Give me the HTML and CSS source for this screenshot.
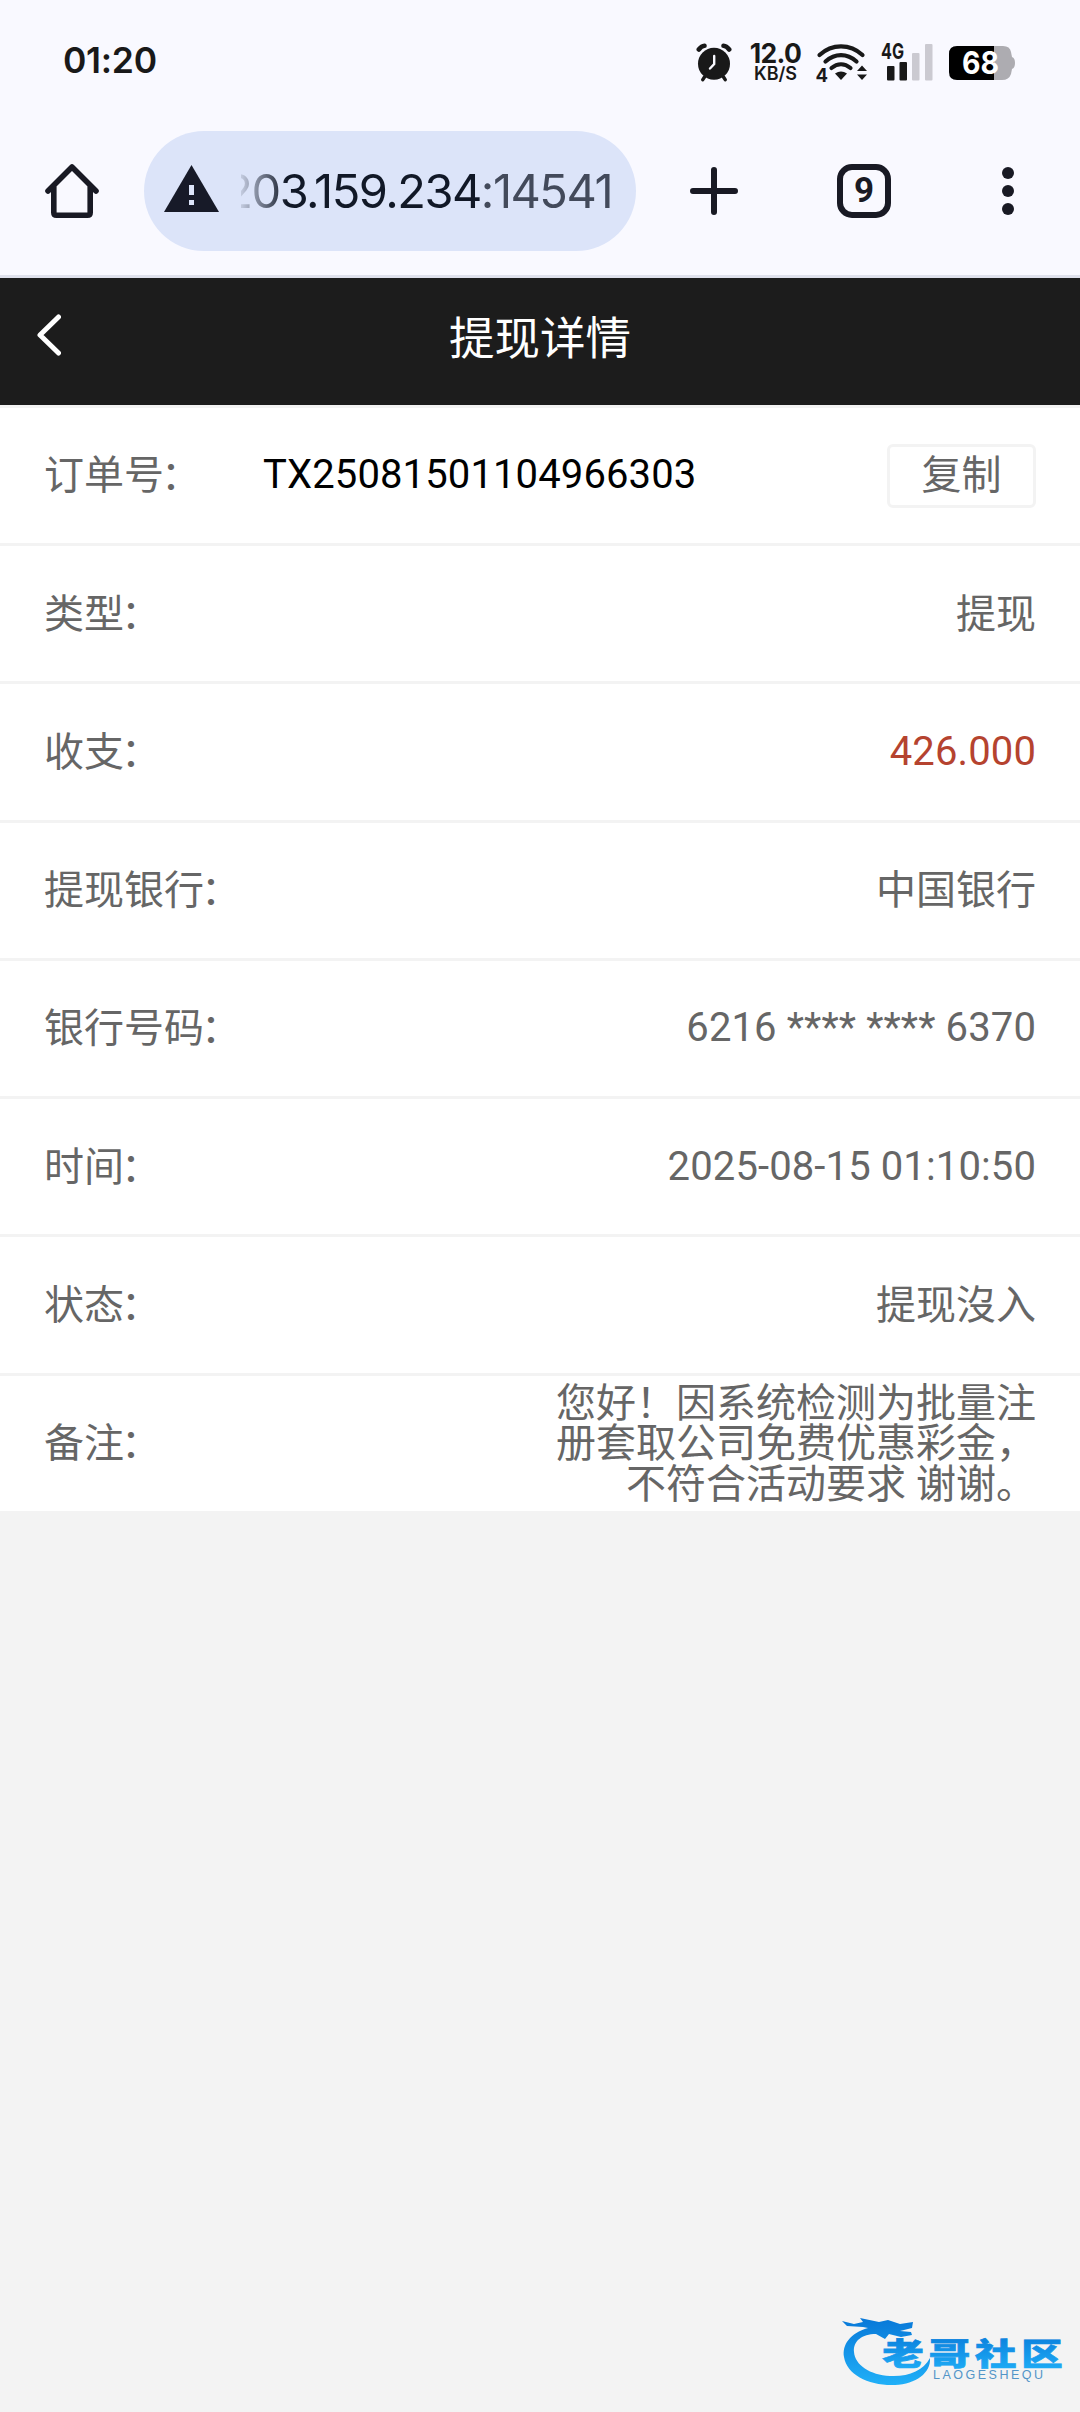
FILE: index.html
```html
<!DOCTYPE html>
<html lang="zh-CN">
<head>
<meta charset="utf-8">
<title>提现详情</title>
<link rel="stylesheet" href="styles.css">
</head>
<body>
<div class="status">
  <span class="clock">01:20</span>
  <div class="indicators">
    <svg class="alarm" width="36" height="39" viewBox="0 0 36 39">
      <g fill="none" stroke="#191919" stroke-linecap="round">
        <path d="M2.8 6.5Q5.500 3 8.500 2.800M33.200 6.500Q30.500 3 27.500 2.800" stroke-width="4.600"/>
        <path d="M8.500 34L6.800 36.700M27.500 34L29.200 36.700" stroke-width="3.400"/>
      </g>
      <circle cx="18" cy="20.800" r="16" fill="#191919"/>
      <path d="M18.200 13V21L14 25.500" fill="none" stroke="#f9f9ff" stroke-width="2.400" stroke-linecap="round"/>
    </svg>
    <div class="speed"><span class="rate">12.0</span><span class="unit">KB/S</span></div>
    <svg class="wifi" width="52" height="40" viewBox="0 0 52 40">
      <g fill="none" stroke="#191919" stroke-width="4.200" stroke-linecap="round">
        <path d="M3.500 12C16 .500 34 .500 46.500 12"/>
        <path d="M9.500 18.500C19 10 31 10 40.500 18.500"/>
        <path d="M15.500 25C21.500 20 28.500 20 34.500 25"/>
      </g>
      <path d="M19 30.500Q25 26.500 31 30.500L25 37Z" fill="#191919"/>
      <path d="M46 22.500L51 28H41ZM46 37L51 31.500H41Z" fill="#191919"/>
      <text class="wifi-gen" x="-.5" y="38.500">4</text>
    </svg>
    <svg class="signal" width="52" height="38" viewBox="0 0 52 38">
      <text class="network" x="0" y="16.300" textLength="23" lengthAdjust="spacingAndGlyphs">4G</text>
      <g fill="#191919"><rect x="6" y="23" width="7.500" height="14.500" rx="1"/><rect x="18.500" y="19" width="7.500" height="18.500" rx="1"/></g>
      <g fill="#cbcad1"><rect x="31" y="10" width="7.500" height="27.500" rx="1"/><rect x="44" y="1" width="7.500" height="36.500" rx="1"/></g>
    </svg>
    <svg class="battery" width="66" height="34" viewBox="0 0 66 34">
      <path d="M45 0H54Q61 0 62 6L63 11Q66 12 66 17T63 23L62 28Q60 34 53 34H45Z" fill="#adacb1"/>
      <path d="M45 0H8Q0 0 0 8V26Q0 34 8 34H45Z" fill="#000"/>
      <text class="charge" x="13" y="28" textLength="37" lengthAdjust="spacingAndGlyphs">68</text>
    </svg>
  </div>
</div>

<div class="toolbar">
  <svg class="home" width="54" height="54" viewBox="0 0 54 54" fill="none" stroke="#191a24" stroke-width="5.600" stroke-linecap="round" stroke-linejoin="round">
    <path d="M3 27L27 3L51 27M8.800 23V48.500Q8.800 51.200 11.500 51.200H42.500Q45.200 51.200 45.200 48.500V23"/>
  </svg>
  <div class="address">
    <svg width="55" height="47" viewBox="0 0 55 47"><path d="M27.500 0L55 47H0Z" fill="#171a28"/><path d="M25 20H30V30H25ZM25 35H30V40H25Z" fill="#dce4f9"/></svg>
    <div class="url"><span class="url-text">203.159.234<span class="port">:14541</span></span></div>
  </div>
  <svg class="plus" width="48" height="48" viewBox="0 0 48 48"><path d="M24 3V45M3 24H45" stroke="#191a24" stroke-width="6" stroke-linecap="round"/></svg>
  <div class="tabs">9</div>
  <svg class="more" width="12" height="48" viewBox="0 0 12 48" fill="#191a24"><circle cx="6" cy="6" r="6"/><circle cx="6" cy="24" r="6"/><circle cx="6" cy="42" r="6"/></svg>
</div>

<header class="header">
  <svg class="back" width="24" height="42" viewBox="0 0 24 42"><path d="M21.500 3L3 21L21.500 39" fill="none" stroke="#fff" stroke-width="5" stroke-linecap="round" stroke-linejoin="round"/></svg>
  <h1 class="title">提现详情</h1>
</header>

<main class="details">
  <div class="row"><span class="label order-label">订单号<span class="colon">：</span></span><span class="order">TX25081501104966303</span><button class="copy">复制</button></div>
  <div class="row"><span class="label">类型<span class="colon">：</span></span><span class="value">提现</span></div>
  <div class="row"><span class="label">收支<span class="colon">：</span></span><span class="value number amount">426.000</span></div>
  <div class="row"><span class="label">提现银行<span class="colon">：</span></span><span class="value">中国银行</span></div>
  <div class="row"><span class="label">银行号码<span class="colon">：</span></span><span class="value number">6216 **** **** 6370</span></div>
  <div class="row"><span class="label">时间<span class="colon">：</span></span><span class="value number">2025-08-15 01:10:50</span></div>
  <div class="row"><span class="label">状态<span class="colon">：</span></span><span class="value">提现沒入</span></div>
  <div class="row"><span class="label">备注<span class="colon">：</span></span><span class="value">您好！因系统检测为批量注<br>册套取公司免费优惠彩金，<br>不符合活动要求 谢谢。</span></div>
</main>

<svg class="brand" width="230" height="76" viewBox="0 0 230 76">
  <defs><linearGradient id="blue" x1="0" y1="0" x2="0" y2="1"><stop offset="0" stop-color="#0878d8"/><stop offset="1" stop-color="#20b0f8"/></linearGradient></defs>
  <path d="M28 13C10 18 2 30 4 42C7 60 29 71 55 70C76 69 91 58 90 43C83 56 68 62 50 61C30 60 15 50 14 37C13 26 22 19 36 19L45 24L49 19L61 22L72 20L71 17L60 16L72 13L73 7L60 9L48 5L39 7L20 3L23 7L14 9L2 6L7 11L23 12Z" fill="url(#blue)"/>
  <g class="brand-name" fill="url(#blue)" stroke="url(#blue)" stroke-width=".7" transform="scale(1.36 1)">
    <text x="31" y="49.800">老</text><text x="65.300" y="49.800">哥</text><text x="99.300" y="49.800">社</text><text x="133.300" y="49.800">区</text>
  </g>
  <text class="brand-latin" x="93" y="64" textLength="110">LAOGESHEQU</text>
</svg>
</body>
</html>
```
FILE: styles.css
```css
* { box-sizing: border-box; }

body {
  position: relative;
  min-height: 2412px;
  margin: 0;
  background: #f3f3f3;
  color: #666;
  font: 40px/40.5px Roboto, "Noto Sans CJK SC", sans-serif;
}

svg { display: block; flex: none; }

.status {
  display: flex;
  justify-content: space-between;
  height: 122px;
  padding: 0 65px 0 63px;
  background: #f9f9ff;
  color: #191919;
  font-family: Inter, sans-serif;
}

.clock {
  padding-top: 41px;
  font-size: 35.500px;
  font-weight: 600;
  letter-spacing: -.3px;
}

.indicators { display: flex; align-items: flex-start; padding-top: 43px; }

.speed {
  display: flex;
  flex-direction: column;
  align-items: center;
  width: 53px;
  margin: 1px 14px 0 17px;
  font-weight: 700;
}

.rate { font-size: 26.500px; line-height: 19px; letter-spacing: -.6px; }
.unit { margin-top: 2px; font-size: 18px; line-height: 17px; font-weight: 600; }
.wifi-gen { font: 700 18.500px Inter, sans-serif; fill: #191919; }
.signal { margin-left: 13px; }
.network { font: 700 22px Inter, sans-serif; fill: #191919; }
.battery { margin: 3px 0 0 16px; }
.charge { font: 700 31px Inter, sans-serif; fill: #fff; }

.toolbar {
  display: flex;
  align-items: center;
  height: 156px;
  padding: 9px 66px 24px 45px;
  border-bottom: 3px solid #dfe1ec;
  background: #f9f9ff;
}

.address {
  display: flex;
  align-items: center;
  width: 492px;
  height: 120px;
  margin: 0 54px 0 45px;
  padding: 0 24px 6px 20px;
  border-radius: 60px;
  background: #dce4f9;
}

.url {
  display: flex;
  justify-content: flex-end;
  width: 371px;
  margin-left: 22px;
  padding-top: 6px;
  overflow: hidden;
  color: #111827;
  font: 47px/60px Inter, sans-serif;
  letter-spacing: -1.500px;
  white-space: nowrap;
  mask-image: linear-gradient(90deg, rgb(0 0 0 / .12), #000 46px);
}

.port { color: #434a5b; }

.tabs {
  width: 54px;
  height: 54px;
  margin: 0 111px 0 99px;
  border: 6px solid #191a24;
  border-radius: 15px;
  color: #191a24;
  font: 700 35px/42px Roboto, sans-serif;
  text-align: center;
}

.header {
  display: grid;
  grid-template-columns: 1fr auto 1fr;
  align-items: center;
  height: 127px;
  padding: 0 37px;
  background: #1c1c1c;
}

.back { margin-bottom: 13px; }

.title {
  margin: 0 0 3px;
  color: #fff;
  font-size: 45.500px;
  font-weight: 400;
  line-height: 60px;
  white-space: nowrap;
}

.details { border-top: 3px solid #f3f3f3; }

.row {
  display: flex;
  align-items: center;
  justify-content: space-between;
  height: 138.240px;
  padding: 0 44px;
  border-bottom: 3px solid #f3f3f3;
  background: #fff;
}

.label, .value { padding-top: 2px; }
.colon { margin-left: -3px; }
.order-label { width: 219px; }
.order { margin-right: auto; color: #000; letter-spacing: .12px; }
.value { text-align: right; }
.number { padding-top: 0; letter-spacing: .12px; }
.amount { color: #b5432f; }

.copy {
  width: 149px;
  height: 64px;
  padding: 2px 0 0;
  border: 3px solid #f3f3f3;
  border-radius: 6px;
  background: #fff;
  color: #666;
  font: inherit;
}

.brand { position: absolute; left: 840px; top: 2315px; }
.brand-name { font: 900 30.500px "Noto Sans CJK SC", sans-serif; }
.brand-latin { font: 12.500px "Liberation Sans", sans-serif; fill: #5295c8; }
```
